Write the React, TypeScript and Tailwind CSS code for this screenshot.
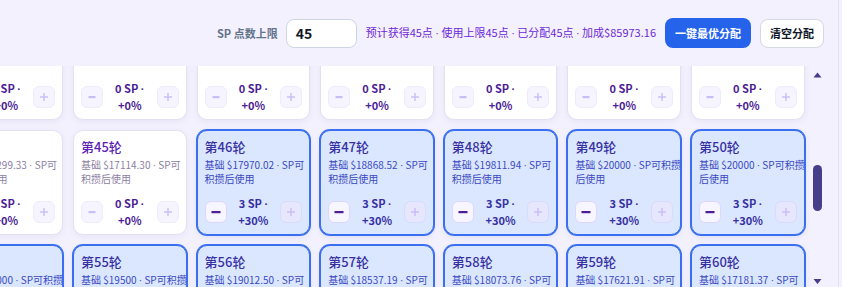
import React from "react";

type Card = {
  round: number;
  base: string;
  sp: number;
};

const ROWS: Card[][] = [
  [34, 35, 36, 37, 38, 39, 40].map((r) => ({ round: r, base: "20000", sp: 0 })),
  [
    { round: 44, base: "16299.33", sp: 0 },
    { round: 45, base: "17114.30", sp: 0 },
    { round: 46, base: "17970.02", sp: 3 },
    { round: 47, base: "18868.52", sp: 3 },
    { round: 48, base: "19811.94", sp: 3 },
    { round: 49, base: "20000", sp: 3 },
    { round: 50, base: "20000", sp: 3 },
  ],
  [
    { round: 54, base: "20000", sp: 3 },
    { round: 55, base: "19500", sp: 3 },
    { round: 56, base: "19012.50", sp: 3 },
    { round: 57, base: "18537.19", sp: 3 },
    { round: 58, base: "18073.76", sp: 3 },
    { round: 59, base: "17621.91", sp: 3 },
    { round: 60, base: "17181.37", sp: 3 },
  ],
];

const FONT = { fontFamily: '"Noto Sans CJK SC", "Noto Sans", sans-serif' };

// narrow middle dot (the CJK font draws it full width)
const Dot = () => <span className="font-['Liberation_Sans']">·</span>;

function MinusIcon({ active }: { active: boolean }) {
  return (
    <svg width="10" height="10" viewBox="0 0 10 10">
      <rect x={active ? 0.5 : 1.5} y="4" width={active ? 9 : 7} height="2.2" fill={active ? "#4c1d95" : "#c9bdf7"} />
    </svg>
  );
}

function PlusIcon() {
  return (
    <svg width="10" height="10" viewBox="0 0 10 10">
      <rect x="1" y="4.3" width="8" height="1.4" fill="#c9bdf7" />
      <rect x="4.3" y="1" width="1.4" height="8" fill="#c9bdf7" />
    </svg>
  );
}

function RoundCard({ card, hiddenTop }: { card: Card; hiddenTop: boolean }) {
  const on = card.sp > 0;
  const decimal = card.base.includes(".");

  return (
    <div
      className={
        on
          ? "flex h-[105px] flex-col rounded-[10px] border border-[#3b6ff0] bg-[#dbe7fe] px-[7px] pt-[7px] pb-[6px] shadow-[0_0_0_1px_#3b6ff0,0_2px_6px_rgba(59,90,220,0.12)]"
          : "flex h-[105px] flex-col rounded-[10px] border border-[#e4e0f2] bg-white px-[7px] pt-[7px] pb-[6px] shadow-[0_2px_6px_rgba(90,70,170,0.07)]"
      }
    >
      <div className={hiddenTop ? "invisible" : ""}>
        <div className={`text-[13px] leading-[18px] font-medium ${on ? "text-[#3730a3]" : "text-[#5b21b6]"}`}>
          第{card.round}轮
        </div>
        <div className={`mt-[2px] text-[10px] leading-[13px] whitespace-nowrap ${on ? "text-[#3a49c2]" : "text-[#8b7fa3]"}`}>
          <div>
            基础 ${card.base} <Dot /> SP可{decimal ? "" : "积攒"}
          </div>
          <div>{decimal ? "积攒后使用" : "后使用"}</div>
        </div>
      </div>
      <div className="mt-auto flex items-center justify-between">
        <div
          className={`flex h-[22px] w-[22px] items-center justify-center rounded-[6px] border ${
            on ? "border-[#ddd6fe] bg-[#f7f5ff]" : "border-[#efebfd] bg-[#f6f4fe]"
          }`}
        >
          <MinusIcon active={on} />
        </div>
        <div className={`flex-1 text-center text-[11px] leading-[16px] font-bold ${on ? "text-[#3730a3]" : "text-[#4c1d95]"}`}>
          <div>
            {card.sp} SP <Dot />
          </div>
          <div>+{card.sp * 10}%</div>
        </div>
        <div
          className={`flex h-[22px] w-[22px] items-center justify-center rounded-[6px] border ${
            on ? "border-[#d7dcfb] bg-[#e6e7fd]" : "border-[#efebfd] bg-[#f6f4fe]"
          }`}
        >
          <PlusIcon />
        </div>
      </div>
    </div>
  );
}

function ScrollBar() {
  return (
    <svg width="15" height="221" viewBox="0 0 15 221" className="shrink-0">
      <polygon points="3.5,11.5 11.5,11.5 7.5,6.5" fill="#483d8b" />
      <rect x="3" y="99" width="9" height="46" rx="4.5" fill="#483d8b" />
      <polygon points="3.5,213 11.5,213 7.5,218" fill="#483d8b" />
    </svg>
  );
}

export default function App() {
  return (
    <div className="flex h-[287px] w-[842px] overflow-hidden bg-[#f3f1fd]" style={FONT}>
      <div className="flex h-full w-[839px] shrink-0 flex-col border-r border-[#e4e1f2]">
        <div className="flex h-[66px] shrink-0 items-center justify-end gap-[9px] pr-[14px]">
          <span className="mr-[-1px] text-[11px] font-semibold text-[#64748b]">SP 点数上限</span>
          <div className="flex h-[29px] w-[71px] items-center rounded-[8px] border border-[#cdd6e4] bg-white pl-[9px] text-[14px] font-bold text-[#111827]">
            45
          </div>
          <span className="text-[11px] text-[#6d28d9]">
            预计获得45点 <Dot /> 使用上限45点 <Dot /> 已分配45点 <Dot /> 加成$85973.16
          </span>
          <button className="h-[30px] w-[86px] rounded-[8px] bg-[#2563eb] text-[11px] font-bold text-white">
            一键最优分配
          </button>
          <button className="h-[29px] w-[64px] rounded-[8px] border border-[#d5d9e3] bg-white text-[11px] font-bold text-[#111827]">
            清空分配
          </button>
        </div>
        <div className="flex min-h-0 flex-1">
          <div className="w-[810px] shrink-0 overflow-hidden">
            <div className="ml-[-50.6px] mt-[-51px] grid grid-cols-[repeat(7,113.6px)] gap-[10px]">
              {ROWS.map((row, i) =>
                row.map((c) => <RoundCard key={c.round} card={c} hiddenTop={i === 0} />)
              )}
            </div>
          </div>
          <ScrollBar />
        </div>
      </div>
    </div>
  );
}
